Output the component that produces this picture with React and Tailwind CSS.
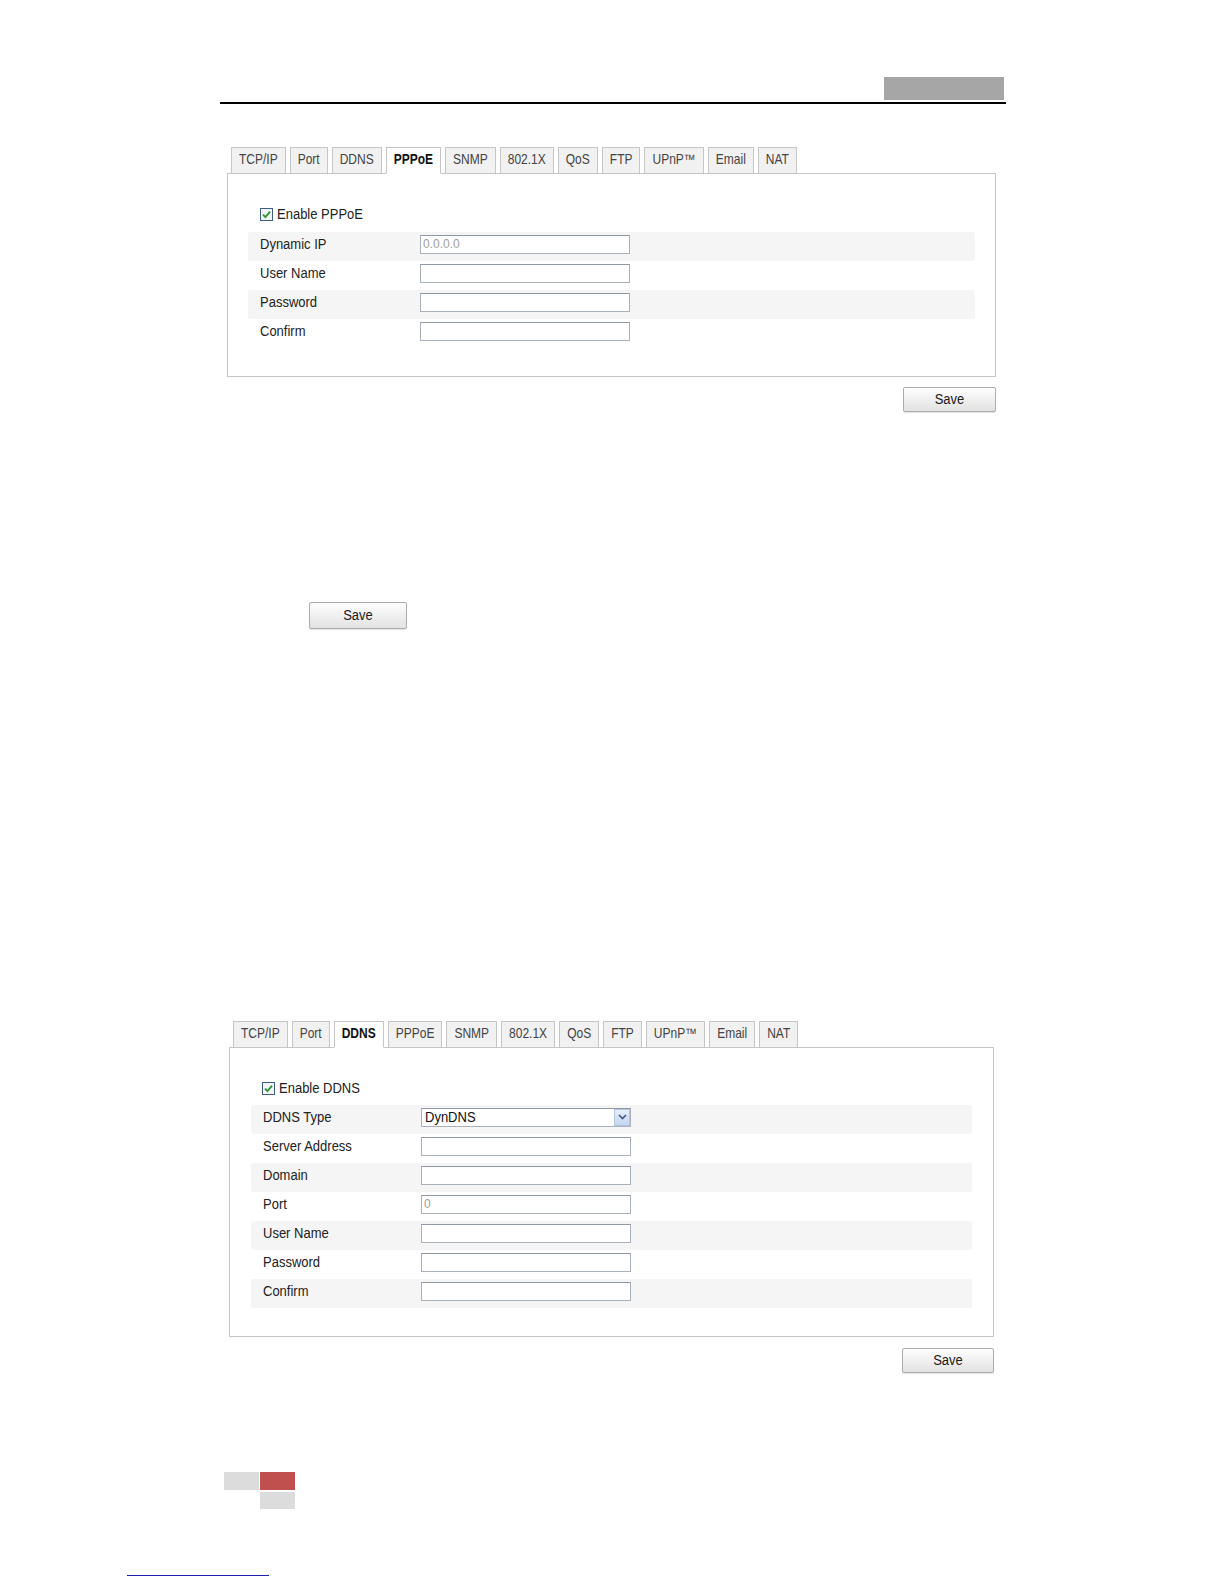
import clsx from "clsx";

const TABS = ["TCP/IP", "Port", "DDNS", "PPPoE", "SNMP", "802.1X", "QoS", "FTP", "UPnP™", "Email", "NAT"];

// glyphs in the source are a bit taller than plain Arial
function T({ children }) {
  return <span className="inline-block scale-y-[1.16]">{children}</span>;
}

function Tabs({ active }) {
  return (
    <div className="relative z-10 -mb-px flex items-end gap-[4px] pl-[4px]">
      {TABS.map((t) => (
        <div
          key={t}
          className={clsx(
            "flex h-[27px] items-center border px-[7px] pb-[2px] text-[12px]",
            t === active
              ? "border-[#c6c6c6] border-b-white bg-white font-bold text-[#111]"
              : "border-[#c6c6c6] bg-[#f1f1f1] text-[#444]"
          )}
        >
          <T>{t}</T>
        </div>
      ))}
    </div>
  );
}

function Check({ label }) {
  return (
    <div className="flex h-[13px] items-center gap-[4px]">
      <svg width="13" height="13" viewBox="0 0 13 13">
        <rect x="0.5" y="0.5" width="12" height="12" fill="#f3f5f8" stroke="#3f5d84" />
        <path d="M3 6.6 L5.4 9.1 L10.1 3.7" stroke="#2e9b32" strokeWidth="1.9" fill="none" />
      </svg>
      <span className="text-[13px] text-[#222]">
        <T>{label}</T>
      </span>
    </div>
  );
}

function Field({ value }) {
  return (
    <div className="flex h-[19px] w-[210px] items-center border border-[#a9b1bc] border-t-[#8f99a6] bg-white pl-[2px] text-[12px] text-[#a0a0a0]">
      {value}
    </div>
  );
}

function Select({ value }) {
  return (
    <div className="flex h-[19px] w-[210px] items-center border border-[#a9b1bc] border-t-[#8f99a6] bg-white text-[13px] text-[#111]">
      <span className="flex-1 pl-[3px]">
        <T>{value}</T>
      </span>
      <div className="flex h-[17px] w-[16px] items-center justify-center border border-[#b3c5de] bg-gradient-to-b from-[#e6eefa] to-[#c5d6ef]">
        <svg width="9" height="6" viewBox="0 0 9 6">
          <path d="M1 1 L4.5 4.5 L8 1" stroke="#3d5a86" strokeWidth="1.6" fill="none" />
        </svg>
      </div>
    </div>
  );
}

function Row({ label, children, shade, lw = "w-[172px]" }) {
  return (
    <div className={clsx("flex h-[29px] items-center pb-[4px]", shade && "rounded-[3px] bg-[#f5f5f5]")}>
      <div className={clsx(lw, "pl-[12px] text-[13px] text-[#222]")}>
        <T>{label}</T>
      </div>
      {children}
    </div>
  );
}

function SaveBtn({ w = "w-[93px]", h = "h-[25px]" }) {
  return (
    <button
      className={clsx(
        w,
        h,
        "rounded-[2px] border border-[#adadad] bg-gradient-to-b from-[#fefefe] to-[#e2e2e2] text-[13px] text-[#1a1a1a] shadow-[0_1px_1px_rgba(0,0,0,0.12)]"
      )}
    >
      <T>Save</T>
    </button>
  );
}

const DDNS_ROWS = [
  ["Server Address", ""],
  ["Domain", ""],
  ["Port", "0"],
  ["User Name", ""],
  ["Password", ""],
  ["Confirm", ""],
];

export default function App() {
  return (
    <div className="h-[1584px] w-[1224px] overflow-hidden bg-white font-['Liberation_Sans',Arial,sans-serif]">
      {/* page header */}
      <div className="ml-[220px] w-[786px] pt-[77px]">
        <div className="flex justify-end pr-[2px]">
          <div className="h-[23px] w-[120px] bg-[#a6a6a6]" />
        </div>
        <div className="mt-[2px] h-[1.5px] bg-black" />
      </div>

      {/* PPPoE panel */}
      <div className="ml-[227px] mt-[43px] w-[769px]">
        <Tabs active="PPPoE" />
        <div className="h-[204px] border border-[#c6c6c6] bg-white">
          <div className="ml-[32px] mt-[34px]">
            <Check label="Enable PPPoE" />
          </div>
          <div className="mx-[20px] mt-[11px]">
            <Row label="Dynamic IP" shade>
              <Field value="0.0.0.0" />
            </Row>
            <Row label="User Name">
              <Field />
            </Row>
            <Row label="Password" shade>
              <Field />
            </Row>
            <Row label="Confirm">
              <Field />
            </Row>
          </div>
        </div>
        <div className="mt-[10px] flex justify-end">
          <SaveBtn />
        </div>
      </div>

      <div className="ml-[309px] mt-[190px]">
        <SaveBtn w="w-[98px]" h="h-[27px]" />
      </div>

      {/* DDNS panel */}
      <div className="ml-[229px] mt-[392px] w-[765px]">
        <Tabs active="DDNS" />
        <div className="h-[290px] border border-[#c6c6c6] bg-white">
          <div className="ml-[32px] mt-[34px]">
            <Check label="Enable DDNS" />
          </div>
          <div className="mx-[21px] mt-[10px]">
            <Row label="DDNS Type" shade lw="w-[170px]">
              <Select value="DynDNS" />
            </Row>
            {DDNS_ROWS.map(([label, v], i) => (
              <Row key={label} label={label} shade={i % 2 === 1} lw="w-[170px]">
                <Field value={v} />
              </Row>
            ))}
          </div>
        </div>
        <div className="mt-[11px] flex justify-end">
          <SaveBtn w="w-[92px]" />
        </div>
      </div>

      {/* footer marks */}
      <div className="ml-[224px] mt-[99px] grid w-[71px] grid-cols-[35px_35px] grid-rows-[18px_17px] gap-x-px gap-y-[2px]">
        <div className="bg-[#dcdcdc]" />
        <div className="bg-[#c0504d]" />
        <div />
        <div className="bg-[#dcdcdc]" />
      </div>
      <div className="ml-[127px] mt-[66px] h-[1.5px] w-[142px] bg-[#2020b0]" />
    </div>
  );
}
